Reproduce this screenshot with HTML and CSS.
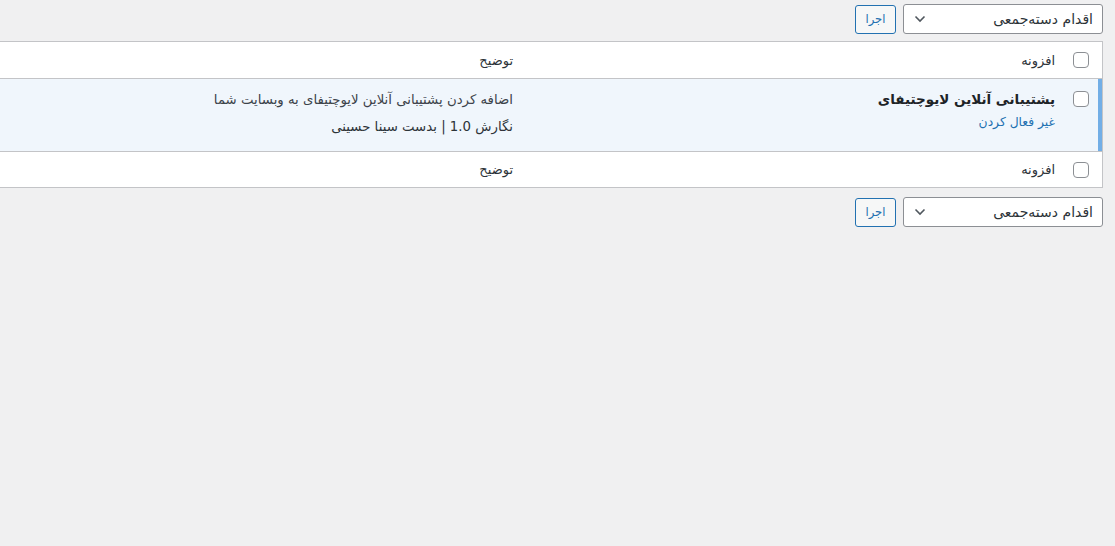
FILE: index.html
```html
<!DOCTYPE html>
<html lang="fa" dir="rtl">
<head>
<meta charset="utf-8">
<title>افزونه‌ها</title>
<link rel="stylesheet" href="styles.css">
</head>
<body>
<div class="wrap">
  <div class="tablenav top">
    <div class="bulk-select">
      <span class="bulk-label">اقدام دسته‌جمعی</span>
      <svg class="chev" width="12" height="8" viewBox="0 0 12 8"><path d="M1.5 1.5 L6 6 L10.5 1.5" fill="none" stroke="#50575e" stroke-width="1.6"/></svg>
    </div>
    <button class="btn">اجرا</button>
  </div>

  <table class="plugins">
    <thead>
      <tr>
        <td class="check-column"><span class="cb"></span></td>
        <th class="col-name">افزونه</th>
        <th class="col-desc">توضیح</th>
      </tr>
    </thead>
    <tbody>
      <tr class="active">
        <th class="check-column"><span class="cb"></span></th>
        <td class="col-name">
          <div class="plugin-title">پشتیبانی آنلاین لایوچتیفای</div>
          <a class="row-action" href="#">غیر فعال کردن</a>
        </td>
        <td class="col-desc">
          <div class="desc">اضافه کردن پشتیبانی آنلاین لایوچتیفای به وبسایت شما</div>
          <div class="meta">نگارش 1.0 | بدست سینا حسینی</div>
        </td>
      </tr>
    </tbody>
    <tfoot>
      <tr>
        <td class="check-column"><span class="cb"></span></td>
        <th class="col-name">افزونه</th>
        <th class="col-desc">توضیح</th>
      </tr>
    </tfoot>
  </table>

  <div class="tablenav bottom">
    <div class="bulk-select">
      <span class="bulk-label">اقدام دسته‌جمعی</span>
      <svg class="chev" width="12" height="8" viewBox="0 0 12 8"><path d="M1.5 1.5 L6 6 L10.5 1.5" fill="none" stroke="#50575e" stroke-width="1.6"/></svg>
    </div>
    <button class="btn">اجرا</button>
  </div>
</div>
</body>
</html>
```

FILE: styles.css
```css
html, body {
  margin: 0;
  padding: 0;
  background: #f0f0f1;
  overflow: hidden;
}
body {
  font-family: "DejaVu Sans", "Noto Sans", sans-serif;
  font-size: 12px;
  color: #3c434a;
  direction: rtl;
}
.wrap {
  padding: 4px 12px 0 0;
}
.tablenav {
  display: flex;
  align-items: center;
  gap: 7px;
  height: 30px;
}
.tablenav.top {
  margin-bottom: 7px;
}
.tablenav.bottom {
  margin-top: 9px;
}
.bulk-select {
  box-sizing: border-box;
  width: 200px;
  height: 30px;
  background: #fff;
  border: 1px solid #8c8f94;
  border-radius: 3px;
  display: flex;
  align-items: center;
  justify-content: space-between;
  padding: 0 9px 0 10px;
  color: #2c3338;
  font-size: 14px;
}
.chev { display: block; }
.btn {
  box-sizing: border-box;
  height: 29px;
  width: 41px;
  padding: 0;
  background: #f6f7f7;
  border: 1px solid #2271b1;
  border-radius: 3px;
  color: #2271b1;
  font-family: inherit;
  font-size: 11.5px;
}
.plugins {
  width: 100%;
  border-collapse: collapse;
  background: #fff;
  border: 1px solid #c3c4c7;
  border-left: none;
}
.plugins th, .plugins td {
  text-align: right;
  font-weight: normal;
  vertical-align: top;
  padding: 0;
}
.plugins thead tr { height: 37px; border-bottom: 1px solid #c3c4c7; }
.plugins tfoot tr { height: 36px; border-top: 1px solid #c3c4c7; }
.plugins thead th, .plugins tfoot th {
  vertical-align: middle;
  font-size: 13px;
  color: #2c3338;
}
.plugins .check-column {
  width: 37px;
  vertical-align: middle;
}
.cb {
  display: block;
  box-sizing: border-box;
  width: 16px;
  height: 16px;
  border: 1px solid #8c8f94;
  border-radius: 4px;
  background: #fff;
  margin-right: 13px;
}
.plugins .col-name {
  width: 522px;
  padding: 0 10px;
}
.plugins .col-desc {
  padding: 0 10px;
}
.active { background: #f0f6fc; }
.plugins .active th.check-column {
  box-shadow: inset -4px 0 0 #72aee6;
  vertical-align: top;
  padding-top: 12px;
  height: 60px;
}
.plugins .active td { padding-top: 12px; }
.plugin-title {
  font-weight: bold;
  font-size: 13.5px;
  color: #1d2327;
  line-height: 16px;
}
.row-action {
  display: block;
  margin-top: 7px;
  color: #2271b1;
  text-decoration: none;
  font-size: 12.3px;
  line-height: 16px;
}
.desc { line-height: 18px; font-size: 13.3px; }
.meta { margin-top: 9px; line-height: 18px; font-size: 13.3px; color: #2c3338; }
```
